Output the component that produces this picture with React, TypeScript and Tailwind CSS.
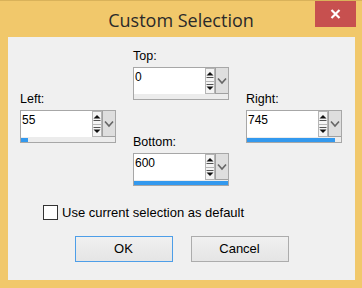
import React from "react";

function SpinBox({ value, fill }: { value: string; fill: number }) {
  return (
    <div className="flex flex-col w-[96px] h-[33px] border border-[#a7a7a7] bg-[#ececec]">
      <div className="flex h-[26px]">
        <div className="flex-1 bg-white pl-[1px] pt-[2px] text-[12px] leading-[15px] text-black">{value}</div>
        <div className="w-[10px] flex flex-col bg-white">
          <div className="flex-1 border border-[#b5b5b5] bg-[#f4f4f4] flex items-center justify-center">
            <svg width="8" height="8" viewBox="0 0 8 8">
              <polygon points="0.5,4.5 4,1 7.5,4.5" fill="#111" />
              <rect x="0.5" y="6" width="7" height="1" fill="#555" />
            </svg>
          </div>
          <div className="flex-1 border border-t-0 border-[#b5b5b5] bg-[#f4f4f4] flex items-center justify-center">
            <svg width="8" height="8" viewBox="0 0 8 8">
              <rect x="0.5" y="1" width="7" height="1" fill="#555" />
              <polygon points="0.5,3.5 7.5,3.5 4,7" fill="#111" />
            </svg>
          </div>
        </div>
        <div className="w-[13px] bg-[#dedede] border border-t-0 border-r-0 border-[#a0a0a0] flex items-center justify-center">
          <svg width="10" height="8" viewBox="0 0 10 8">
            <polyline points="1,1.5 5,6 9,1.5" fill="none" stroke="#666" strokeWidth="1.6" />
          </svg>
        </div>
      </div>
      <div className="flex-1 pt-[1px]">
        <div className="h-full bg-[#3399ee]" style={{ width: `${fill}%` }} />
      </div>
    </div>
  );
}

function Field({ label, value, fill }: { label: string; value: string; fill: number }) {
  return (
    <div className="flex flex-col">
      <div className="h-[15px] leading-[15px] text-[12.5px] text-black mb-[3px]">{label}</div>
      <SpinBox value={value} fill={fill} />
    </div>
  );
}

export default function App() {
  return (
    <div
      className="w-[362px] h-[288px] bg-[#f1c86b] flex flex-col border-t border-[#d9b25a]"
      style={{ fontFamily: '"Liberation Sans", Arial, sans-serif' }}
    >
      <div className="relative h-[36px] flex items-start justify-center">
        <div
          className="text-[18px] leading-[24px] pt-[7px] text-[#2a2a2a]"
          style={{ fontFamily: '"Open Sans", "Noto Sans", sans-serif' }}
        >
          Custom Selection
        </div>
        <div className="absolute right-[6px] top-0 w-[41px] h-[26px] bg-[#c7504f] flex items-center justify-center">
          <svg width="11" height="10" viewBox="0 0 11 10">
            <path d="M1.5 1 L9.5 9 M9.5 1 L1.5 9" stroke="#fff" strokeWidth="2.2" />
          </svg>
        </div>
      </div>
      <div className="ml-[8px] mr-[7px] h-[243px] bg-[#f0f0f0] flex flex-col">
        <div className="flex gap-[17px] pl-[12px] pt-[12px]">
          <div className="mt-[43px]">
            <Field label="Left:" value="55" fill={7} />
          </div>
          <div className="flex flex-col">
            <Field label="Top:" value="0" fill={0} />
            <div className="mt-[35px]">
              <Field label="Bottom:" value="600" fill={100} />
            </div>
          </div>
          <div className="mt-[43px]">
            <Field label="Right:" value="745" fill={94} />
          </div>
        </div>
        <div className="flex items-center mt-[19px] pl-[35px] h-[15px]">
          <div className="w-[15px] h-[15px] border border-[#333] bg-white" />
          <div className="ml-[4px] text-[13px] text-black leading-[15px]">Use current selection as default</div>
        </div>
        <div className="flex justify-center gap-[18px] mt-[16px]">
          <div className="w-[98px] h-[26px] border border-[#4d9ee8] bg-gradient-to-b from-[#f0f0f0] to-[#e5e5e5] flex items-center justify-center text-[13px] text-black">
            OK
          </div>
          <div className="w-[98px] h-[26px] border border-[#acacac] bg-gradient-to-b from-[#f0f0f0] to-[#e5e5e5] flex items-center justify-center text-[13px] text-black">
            Cancel
          </div>
        </div>
      </div>
    </div>
  );
}
